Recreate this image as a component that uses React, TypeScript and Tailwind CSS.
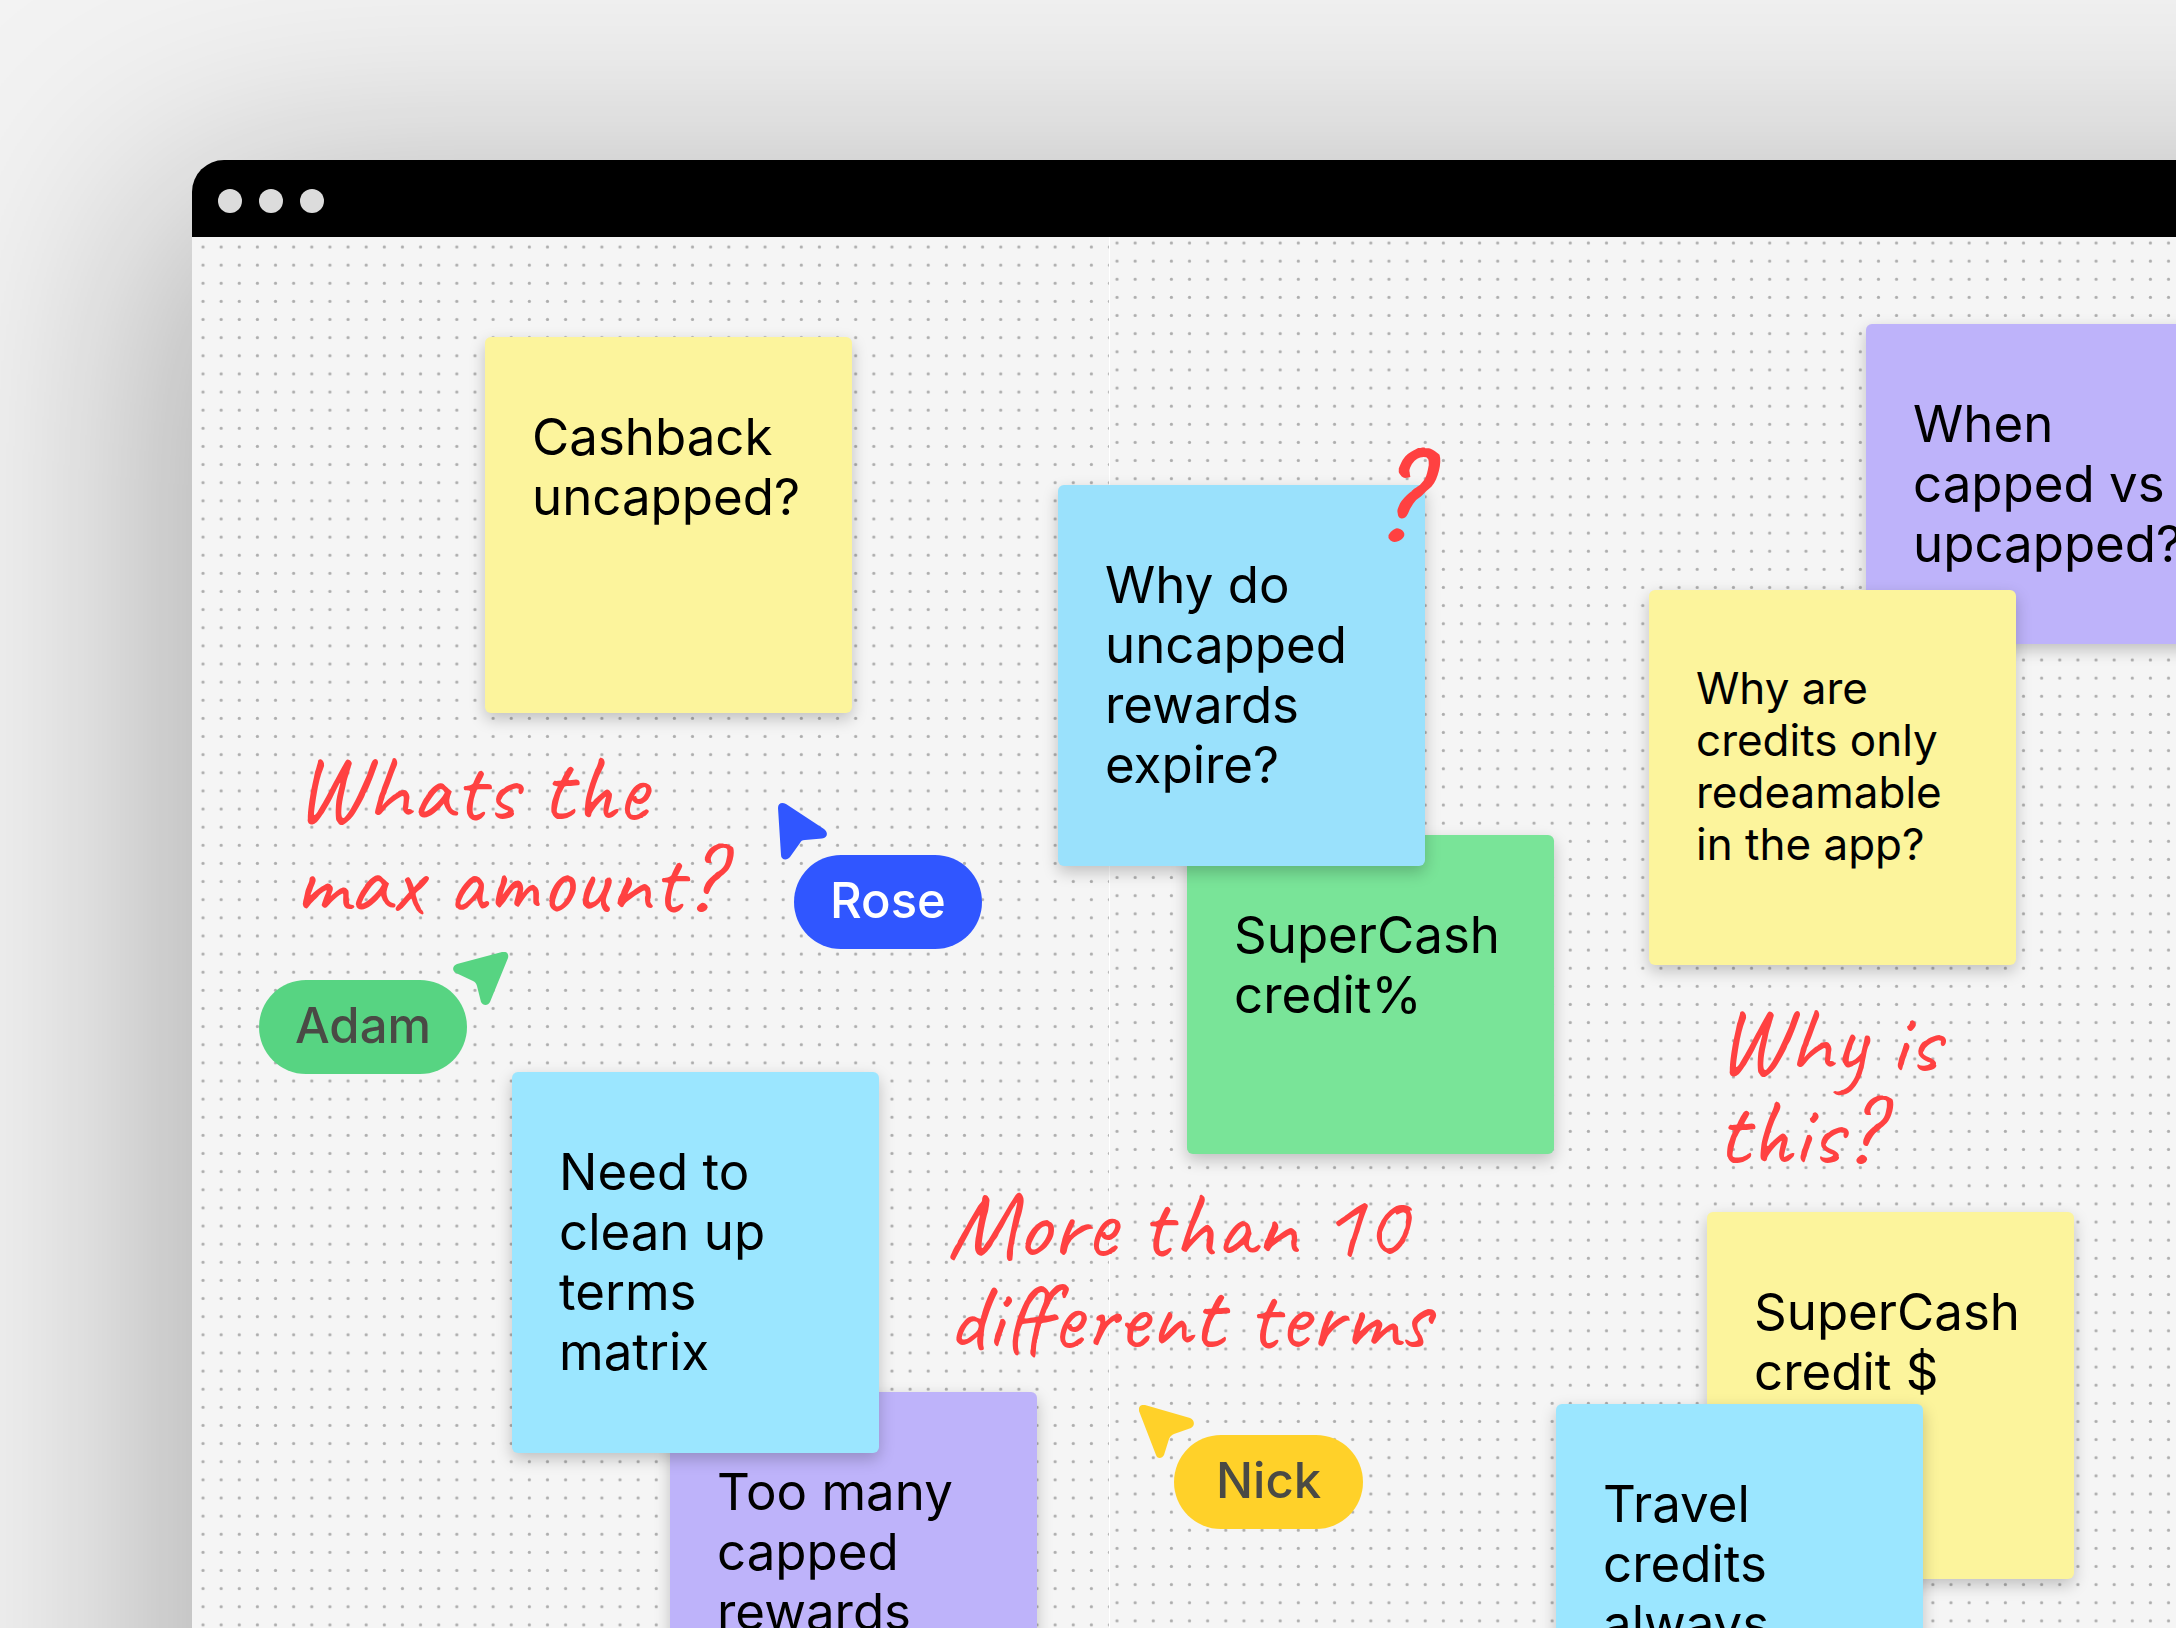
import React from "react";

// Sticky notes, later ones lie on top of earlier ones
const NotesData = [
  { id: "1", text: "Cashback uncapped?", place: "left-[293px] top-[100px] h-[376px]", color: "bg-[#fcf49c]" },
  { id: "2", text: "SuperCash credit%", place: "left-[995px] top-[598px] h-[319px]", color: "bg-[#79e498]" },
  { id: "3", text: "Why do uncapped rewards expire?", place: "left-[866px] top-[248px] h-[381px]", color: "bg-[#9ae1fc]" },
  { id: "4", text: "When capped vs upcapped?", place: "left-[1674px] top-[87px] h-[320px]", color: "bg-[#beb3fa]" },
  { id: "5", text: "Why are credits only redeamable in the app?", place: "left-[1457px] top-[353px] h-[375px]", color: "bg-[#fcf49c]", small: true },
  { id: "6", text: "Too many capped rewards", place: "left-[478px] top-[1155px] h-[375px]", color: "bg-[#beb3fa]" },
  { id: "7", text: "Need to clean up terms matrix", place: "left-[320px] top-[835px] h-[381px]", color: "bg-[#9be6ff]" },
  { id: "8", text: "SuperCash credit $", place: "left-[1515px] top-[975px] h-[367px]", color: "bg-[#fcf49c]" },
  { id: "9", text: "Travel credits always", place: "left-[1364px] top-[1167px] h-[381px]", color: "bg-[#9be6ff]" },
];

// Handwritten remarks
const RemarksData = [
  { id: "1", lines: ["Whats the", "max amount?"], place: "left-[102px] top-[506px]" },
  { id: "2", lines: ["More than 10", "different terms"], place: "left-[755px] top-[942px]" },
  { id: "3", lines: ["Why is", "this?"], place: "left-[1524px] top-[758px]" },
];

const Note: React.FC<{ text: string; place: string; color: string; small?: boolean }> = ({
  text,
  place,
  color,
  small,
}) => (
  <article
    className={`absolute w-[367px] rounded-md pr-10 pl-[47px] text-black shadow-[0_6px_16px_rgba(0,0,0,0.22)] ${
      small ? "pt-[72px] text-[44px] leading-[52px]" : "pt-[70px] text-[51px] leading-[60px]"
    } ${place} ${color}`}
  >
    <p>{text}</p>
  </article>
);

const DotGrid: React.FC<{ id: string; x: number; y: number }> = ({ id, x, y }) => (
  <svg className="h-full w-full" aria-hidden="true">
    <defs>
      <pattern id={id} x={x - 9} y={y - 9} width="18.13" height="18.13" patternUnits="userSpaceOnUse">
        <circle cx="9" cy="9" r="1.6" fill="#adadad" />
      </pattern>
    </defs>
    <rect width="100%" height="100%" fill={`url(#${id})`} />
  </svg>
);

const App: React.FC = () => {
  return (
    <main className="h-screen overflow-hidden bg-[#f3f3f3] pt-40 pl-48 font-[family-name:Inter,sans-serif]">
      {/* The window runs on past the right and bottom edges */}
      <div className="-mr-96 flex h-[140%] flex-col rounded-tl-4xl shadow-[-40px_30px_360px_rgba(0,0,0,0.29)]">
        {/*~~~~~~~~$ Title Bar $~~~~~~~~*/}
        <header className="flex h-[77px] shrink-0 items-center gap-[17px] rounded-tl-4xl bg-black pt-1 pl-[26px]">
          <span className="size-6 rounded-full bg-[#dcdcdc]" />
          <span className="size-6 rounded-full bg-[#dcdcdc]" />
          <span className="size-6 rounded-full bg-[#dcdcdc]" />
        </header>

        {/*~~~~~~~~$ Board $~~~~~~~~*/}
        <section className="relative flex-1 overflow-hidden bg-[#f5f5f5]">
          <div className="absolute inset-0 flex">
            <div className="w-[918px] shrink-0 border-r border-white">
              <DotGrid id="dots-left" x={11} y={10} />
            </div>
            <div className="flex-1">
              <DotGrid id="dots-right" x={7} y={6} />
            </div>
          </div>

          {NotesData.map((note) => (
            <Note key={note.id} text={note.text} place={note.place} color={note.color} small={note.small} />
          ))}

          {RemarksData.map((remark) => (
            <p
              key={remark.id}
              className={`absolute font-[family-name:Caveat,cursive] text-[96px] leading-[92px] font-medium whitespace-nowrap text-[#ff4141] ${remark.place}`}
            >
              {remark.lines[0]}
              <br />
              {remark.lines[1]}
            </p>
          ))}
          <span className="absolute top-[193px] left-[1178px] font-[family-name:Caveat,cursive] text-[128px] leading-[140px] font-bold text-[#ff4141]">
            ?
          </span>

          {/*~~~~~~~~$ Cursors $~~~~~~~~*/}
          <svg className="absolute top-[566px] left-[586px] h-[57px] w-[50px]" viewBox="0 0 50 57" fill="#3056ff">
            <path d="M0 5C0 0 4 -1 8 1L46 26C51 30 49 35 44 35.500L27 37C24 37 23 38 22 40L12 54C9 58 3 57 3 52Z" />
          </svg>
          <span className="absolute top-[618px] left-[602px] flex h-[94px] items-center rounded-full bg-[#3056ff] px-9 pb-0.5 text-[49px] font-medium text-white">
            Rose
          </span>

          <svg className="absolute top-[715px] left-[261px] h-[54px] w-[56px]" viewBox="0 0 56 54" fill="#57d482">
            <path d="M49 0C54 -1 56 2 55 6L37 50C35 54 30 54 28 50L24 34C23 31 22 30 20 29L3 21C-1 19 -1 14 4 12Z" />
          </svg>
          <span className="absolute top-[743px] left-[67px] flex h-[94px] items-center rounded-full bg-[#57d482] px-9 pb-0.5 text-[49px] font-medium text-[#4a4a45]">
            Adam
          </span>

          <svg className="absolute top-[1168px] left-[947px] h-[54px] w-[56px]" viewBox="0 0 56 54" fill="#ffd129">
            <path d="M0 6C-1 2 2 -1 6 0L51 13C56 15 56 21 52 23L35 29C32 30 31 32 30 34L25 50C23 54 18 54 17 50Z" />
          </svg>
          <span className="absolute top-[1198px] left-[982px] flex h-[94px] items-center rounded-full bg-[#ffd129] px-[42px] pb-0.5 text-[49px] font-medium text-[#4a4a45]">
            Nick
          </span>
        </section>
      </div>
    </main>
  );
};

export default App;
